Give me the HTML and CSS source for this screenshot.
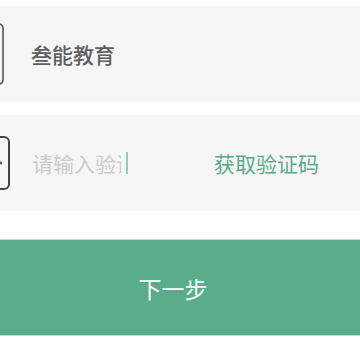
FILE: index.html
```html
<!DOCTYPE html>
<html lang="zh-CN">
<head>
<meta charset="utf-8">
<link rel="stylesheet" href="styles.css">
</head>
<body>
<div class="page">
  <div class="field">
    <svg class="icon icon-org" width="30" height="62" viewBox="0 0 30 62"><rect x="1" y="1" width="28" height="60" rx="4" fill="none" stroke="#555" stroke-width="1.6"/></svg>
    <span class="value">叁能教育</span>
  </div>
  <div class="field">
    <svg class="icon icon-code" width="30" height="54" viewBox="0 0 30 54"><rect x="1" y="1" width="28" height="52" rx="5" fill="none" stroke="#444" stroke-width="2"/><circle cx="20.5" cy="27" r="1.6" fill="#555"/></svg>
    <span class="placeholder">请输入验证码</span><span class="caret"></span>
    <span class="get-code">获取验证码</span>
  </div>
  <div class="next">下一步</div>
</div>
</body>
</html>
```
FILE: styles.css
```css
html, body {
  margin: 0;
  padding: 0;
  background: #ffffff;
  overflow: hidden;
}
.page {
  padding-top: 6px;
  display: flex;
  flex-direction: column;
  font-family: "Noto Sans CJK SC", "Noto Sans", sans-serif;
}
.field {
  height: 96px;
  background: #f6f6f6;
  display: flex;
  align-items: center;
  margin-bottom: 13px;
}
.icon {
  flex: none;
  display: block;
}
.icon-org {
  margin-left: -26px;
  margin-right: 27px;
}
.icon-code {
  margin-left: -20px;
  margin-right: 22px;
}
.value {
  font-size: 21px;
  font-weight: 500;
  color: #5e5e5e;
}
.placeholder {
  font-size: 21px;
  color: #cbcbcb;
  width: 89px;
  overflow: hidden;
  white-space: nowrap;
}
.caret {
  width: 2px;
  height: 22px;
  background: #8fd0b0;
  margin-left: 5px;
}
.get-code {
  margin-left: auto;
  padding-right: 41px;
  font-size: 21px;
  color: #5aab87;
}
.next {
  margin-top: 15px;
  height: 97px;
  background: #5aad8a;
  border-top: 1px solid #b9dccd;
  border-bottom: 1px solid #b9dccd;
  box-sizing: border-box;
  display: flex;
  align-items: center;
  justify-content: center;
  padding-right: 14px;
  font-size: 23px;
  color: #ffffff;
}
```
